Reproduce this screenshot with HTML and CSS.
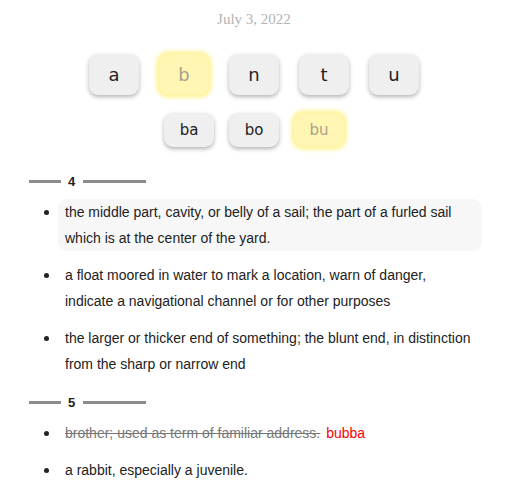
FILE: index.html
```html
<!DOCTYPE html>
<html lang="en">
<head>
  <meta charset="UTF-8">
  <meta name="viewport" content="width=device-width, initial-scale=1.0">
  <title>Word Builder</title>
  <link rel="stylesheet" href="styles.css">
</head>
<body>
  <div class="page">
    <div class="date">July 3, 2022</div>

    <div class="letters">
      <button class="key">a</button>
      <button class="key lit">b</button>
      <button class="key">n</button>
      <button class="key">t</button>
      <button class="key">u</button>
    </div>

    <div class="syllables">
      <button class="key small">ba</button>
      <button class="key small">bo</button>
      <button class="key small lit">bu</button>
    </div>

    <div class="group">
      <span class="rule short"></span>
      <span class="num">4</span>
      <span class="rule long"></span>
    </div>
    <ul class="defs">
      <li class="def current"><span class="dot"></span><span class="text">the middle part, cavity, or belly of a sail; the part of a furled sail which is at the center of the yard.</span></li>
      <li class="def"><span class="dot"></span><span class="text">a float moored in water to mark a location, warn of danger, indicate a navigational channel or for other purposes</span></li>
      <li class="def"><span class="dot"></span><span class="text">the larger or thicker end of something; the blunt end, in distinction from the sharp or narrow end</span></li>
    </ul>

    <div class="group">
      <span class="rule short"></span>
      <span class="num">5</span>
      <span class="rule long"></span>
    </div>
    <ul class="defs">
      <li class="def"><span class="dot"></span><span class="text"><s class="wrong">brother; used as term of familiar address.</s> <span class="guess">bubba</span></span></li>
      <li class="def"><span class="dot"></span><span class="text">a rabbit, especially a juvenile.</span></li>
    </ul>
  </div>
</body>
</html>
```

FILE: styles.css
```css
/* General */
body {
  margin: 0;
  background-color: #fff;
  font-family: 'Liberation Sans', Arial, sans-serif;
  color: #222;
}

.page {
  width: 508px;
  padding-top: 9px;
}

.date {
  font-family: 'Liberation Serif', Georgia, serif;
  font-size: 15px;
  line-height: 20px;
  color: #b3b3b3;
  text-align: center;
}

/* Keys */
.letters,
.syllables {
  display: flex;
  justify-content: center;
}

.letters {
  gap: 20px;
  margin-top: 25px;
}

.syllables {
  gap: 15px;
  margin-top: 18px;
}

.key {
  width: 50px;
  height: 41px;
  padding: 0;
  border: none;
  border-radius: 9px;
  background-color: #efefef;
  box-shadow: 0 2px 4px rgba(0, 0, 0, 0.3);
  font-family: 'DejaVu Sans', Verdana, sans-serif;
  font-size: 18px;
  color: #222;
  cursor: pointer;
}

.key.small {
  height: 34px;
  font-size: 15px;
}

.key.lit {
  background-color: #fff6b4;
  box-shadow: 0 0 5px 2px #fff07a;
  color: #aaa08a;
}

/* Groups */
.group {
  display: flex;
  align-items: center;
  height: 16px;
  margin-top: 26px;
  padding-left: 29px;
}

.defs + .group {
  margin-top: 17px;
}

.rule {
  height: 3px;
  background-color: #8c8c8c;
}

.rule.short {
  width: 32px;
}

.rule.long {
  width: 63px;
}

.num {
  margin: 0 8px 0 7px;
  font-size: 13px;
  font-weight: bold;
  color: #222;
}

.defs {
  list-style: none;
  margin: 10px 0 0;
  padding: 0;
}

.def {
  display: flex;
  align-items: flex-start;
  margin-bottom: 11px;
  font-size: 14px;
  line-height: 26px;
}

.dot {
  flex: none;
  width: 5px;
  height: 5px;
  margin: 11px 9px 0 44px;
  border-radius: 50%;
  background-color: #222;
}

.text {
  width: 410px;
  padding: 0 7px;
  border-radius: 9px;
}

.def.current .text {
  background-color: #f7f7f7;
}

.wrong {
  color: #777;
}

.guess {
  margin-left: 2px;
  color: #f00;
}
```
